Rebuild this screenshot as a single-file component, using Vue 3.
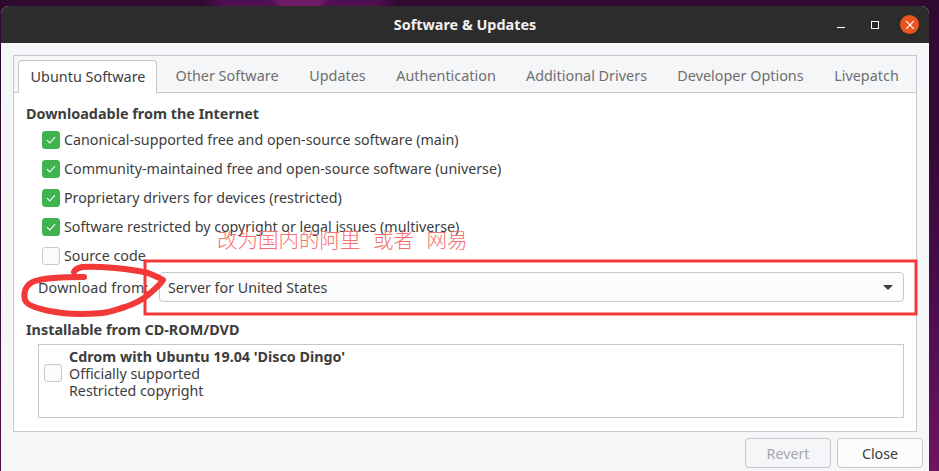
<script setup>
const tabs = ['Other Software', 'Updates', 'Authentication', 'Additional Drivers', 'Developer Options', 'Livepatch']
const sources = [
  'Canonical-supported free and open-source software (main)',
  'Community-maintained free and open-source software (universe)',
  'Proprietary drivers for devices (restricted)',
  'Software restricted by copyright or legal issues (multiverse)'
]
</script>

<template>
  <div class="desktop">
    <div class="window">
      <header class="titlebar">
        <span class="title">Software &amp; Updates</span>
        <div class="controls">
          <svg class="ctl" width="12" height="12" viewBox="0 0 12 12"><path d="M2 8.5h8" stroke="#fff" stroke-width="1" fill="none" /></svg>
          <svg class="ctl" width="12" height="12" viewBox="0 0 12 12"><rect x="2.5" y="2.5" width="7" height="7" stroke="#fff" stroke-width="1" fill="none" /></svg>
          <span class="close-btn">
            <svg width="12" height="12" viewBox="0 0 12 12"><path d="M2.2 2.2l7.6 7.6M9.8 2.2l-7.6 7.6" stroke="#fff" stroke-width="1.2" fill="none" /></svg>
          </span>
        </div>
      </header>

      <div class="body">
        <section class="notebook">
          <nav class="tabs">
            <span class="tab active">Ubuntu Software</span>
            <span v-for="t in tabs" :key="t" class="tab">{{ t }}</span>
          </nav>
          <div class="page">
            <h3 class="heading">Downloadable from the Internet</h3>
            <ul class="checks">
              <li v-for="s in sources" :key="s" class="check-row">
                <span class="box on">
                  <svg width="12" height="12" viewBox="0 0 12 12"><path d="M2 6.2l2.8 2.8 5.2-5.8" stroke="#fff" stroke-width="1.1" fill="none" /></svg>
                </span>
                {{ s }}
              </li>
              <li class="check-row"><span class="box"></span>Source code</li>
            </ul>
            <div class="download-row">
              <span class="dl-label">Download from:</span>
              <div class="combo">
                <span>Server for United States</span>
                <i class="arrow"></i>
              </div>
            </div>
            <h3 class="heading second">Installable from CD-ROM/DVD</h3>
            <div class="cdrom">
              <span class="box"></span>
              <div class="cd-text">
                <strong>Cdrom with Ubuntu 19.04 'Disco Dingo'</strong>
                <span>Officially supported</span>
                <span>Restricted copyright</span>
              </div>
            </div>
          </div>
        </section>
        <footer class="actions">
          <button class="btn disabled">Revert</button>
          <button class="btn">Close</button>
        </footer>
      </div>
    </div>

    <svg class="ink" width="939" height="471" viewBox="0 0 939 471">
      <rect x="145" y="261" width="771" height="53" fill="none" stroke="#f33838" stroke-width="3" />
      <path d="M84 277 C70 277 48 277 35 281 C26 284 23 292 25 300 C27 306 40 310 62 313 C78 315 92 314 102 313 C112 312 118 309 125 307 C134 304 142 300 148 295 C154 290 160 285 163 280 C158 277 153 275 148 273 C136 270 126 269 115 268 C104 267 92 266 82 267 C78 268 75 269 74 272" fill="none" stroke="#f33838" stroke-width="6" stroke-linecap="round" stroke-linejoin="round" />
    </svg>
    <span class="note">改为国内的阿里 或者 网易</span>
  </div>
</template>

<style scoped>
.desktop {
  position: relative;
  width: 939px;
  height: 471px;
  overflow: hidden;
  padding: 6px 0 0 1px;
  box-sizing: border-box;
  background:
    radial-gradient(ellipse 30px 14px at 300px 0, #6f1a66 0%, #6f1a66 70%, transparent 100%),
    radial-gradient(ellipse 100px 20px at 300px 0, #4e0f50 0%, #4e0f50 80%, transparent 100%),
    linear-gradient(172deg, #2e0a2e 0%, #330a34 45%, #4a0c4c 70%, #6c1660 100%);
  font-family: "Noto Sans", sans-serif;
  font-size: 14.25px;
  color: #3d3d3d;
}
.window {
  width: 928px;
  height: 480px;
  border-radius: 8px 8px 0 0;
  overflow: hidden;
  background: #f5f6f7;
  display: flex;
  flex-direction: column;
}
.titlebar {
  height: 37px;
  flex: none;
  background: #2d2c2c;
  display: flex;
  align-items: center;
  justify-content: center;
  position: relative;
}
.title {
  color: #f2f2f2;
  font-weight: 700;
  font-size: 14.4px;
}
.controls {
  position: absolute;
  right: 10px;
  top: 9px;
  display: flex;
  align-items: center;
  gap: 22px;
}
.close-btn {
  width: 19px;
  height: 19px;
  margin-left: -3px;
  border-radius: 50%;
  background: #e95420;
  display: flex;
  align-items: center;
  justify-content: center;
}
.body {
  flex: 1;
  padding: 12px 11px 0 12px;
  display: flex;
  flex-direction: column;
}
.notebook {
  width: 904px;
  height: 377px;
  box-sizing: border-box;
  border: 1px solid #c5c9cd;
  display: flex;
  flex-direction: column;
}
.tabs {
  height: 37px;
  flex: none;
  box-sizing: border-box;
  display: grid;
  grid-template-columns: 142px 134px 87px 130px 151px 157px 95px;
  padding: 4px 0 0 4px;
  border-bottom: 1px solid #c5c9cd;
  color: #6f6f6f;
  font-size: 14.4px;
}
.tab {
  display: flex;
  align-items: center;
  justify-content: center;
  height: 30px;
  white-space: nowrap;
}
.tab.active {
  width: 139px;
  height: 33px;
  padding: 0 0 2px 1px;
  box-sizing: border-box;
  background: #fff;
  border: 1px solid #c5c9cd;
  border-bottom: none;
  border-radius: 4px 4px 0 0;
  color: #3d3d3d;
}
.page {
  flex: 1;
  background: #fff;
  padding: 12px 12px 0;
  box-sizing: border-box;
}
.heading {
  margin: 0;
  font-size: 14.4px;
  font-weight: 700;
  line-height: 17px;
  color: #3d3d3d;
}
.heading.second {
  margin-top: 19px;
}
.checks {
  list-style: none;
  margin: 3px 0 0;
  padding: 0 0 0 16px;
}
.check-row {
  height: 29px;
  display: flex;
  align-items: center;
  gap: 4px;
  white-space: nowrap;
}
.box {
  width: 18px;
  height: 18px;
  flex: none;
  box-sizing: border-box;
  border: 1px solid #c5c9cd;
  border-radius: 3px;
  background: #fbfbfb;
  display: flex;
  align-items: center;
  justify-content: center;
}
.box.on {
  background: #3eb34f;
  border-color: #3eb34f;
}
.download-row {
  margin-top: 2px;
  padding-left: 12px;
  display: flex;
  align-items: center;
  height: 30px;
}
.dl-label {
  width: 121px;
  flex: none;
  white-space: nowrap;
  letter-spacing: 0.2px;
}
.combo {
  width: 745px;
  height: 30px;
  box-sizing: border-box;
  border: 1px solid #c5c9cd;
  border-radius: 4px;
  background: #fcfcfc;
  display: flex;
  align-items: center;
  justify-content: space-between;
  padding: 0 10px 0 8px;
}
.arrow {
  width: 0;
  height: 0;
  border-left: 5px solid transparent;
  border-right: 5px solid transparent;
  border-top: 5px solid #3d3d3d;
}
.cdrom {
  margin: 6px 0 0 12px;
  width: 866px;
  height: 74px;
  box-sizing: border-box;
  border: 1px solid #c5c9cd;
  display: flex;
  align-items: flex-start;
  padding: 3px 0 0 5px;
  gap: 7px;
}
.cdrom .box {
  margin-top: 16px;
}
.cd-text {
  display: flex;
  flex-direction: column;
  line-height: 17px;
}
.cd-text strong {
  font-size: 14.3px;
}
.actions {
  display: flex;
  justify-content: flex-end;
  gap: 6px;
  padding: 6px 5px 0 0;
  width: 910px;
}
.btn {
  width: 86px;
  height: 30px;
  box-sizing: border-box;
  border: 1px solid #c5c9cd;
  border-radius: 4px;
  background: #fcfcfc;
  color: #3d3d3d;
  font: inherit;
  padding: 0;
}
.btn.disabled {
  background: #f5f6f7;
  color: #a5a9ad;
}
.ink {
  position: absolute;
  left: 0;
  top: 0;
  pointer-events: none;
}
.note {
  position: absolute;
  left: 217px;
  top: 226px;
  font-family: "Noto Sans CJK SC", sans-serif;
  font-weight: 300;
  font-size: 20.5px;
  line-height: 26px;
  word-spacing: 8px;
  color: #f87070;
  white-space: pre;
}
</style>
